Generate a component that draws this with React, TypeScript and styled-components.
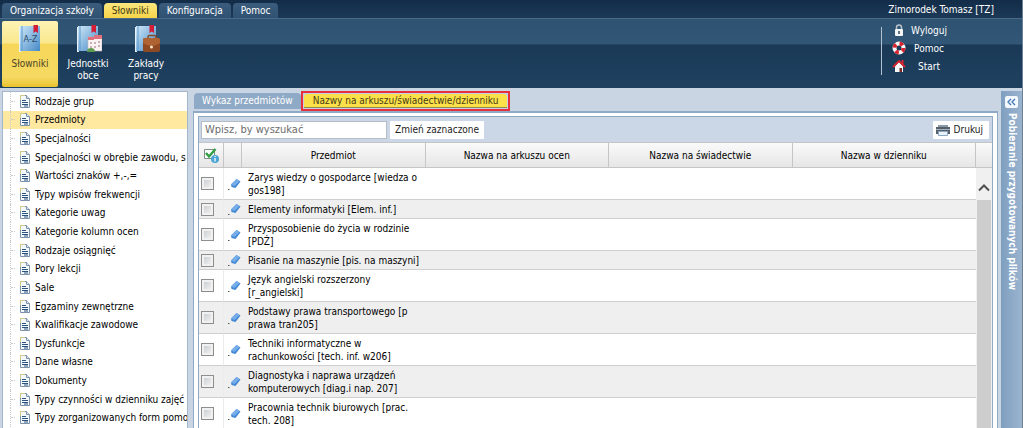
import React from "react";
import styled, { createGlobalStyle, css } from "styled-components";

const Global = createGlobalStyle`
  *, *::before, *::after { box-sizing: border-box; }
  html, body, #root { height: 100%; margin: 0; }
  body { overflow: hidden; background: #cad5e4; }
  body, button, input { font-family: "DejaVu Sans Condensed", "Noto Sans", sans-serif; font-size: 10px; }
`;

const Page = styled.div`
  height: 100vh;
  display: flex;
  flex-direction: column;
  border-right: 1px solid #6f8191;
  color: #000;
`;
const TopBar = styled.header`
  flex: none;
  display: flex;
  justify-content: space-between;
  height: 18px;
  background: linear-gradient(#132c48, #1b3957);
`;
const Nav = styled.nav`
  display: flex;
  gap: 2px;
  padding: 3px 0 0 2px;
`;
const NavTab = styled.button<{ $on?: boolean }>`
  height: 15px;
  padding: 0 8px;
  border: 0;
  border-radius: 4px 4px 0 0;
  line-height: 15px;
  white-space: nowrap;
  color: ${(p) => (p.$on ? "#453c16" : "#fff")};
  background: ${(p) => (p.$on ? "linear-gradient(#fbe77e, #f7d54a)" : "linear-gradient(#3b5c7c, #2f5273)")};
`;
const User = styled.div`
  padding-right: 28px;
  line-height: 20px;
  color: #fff;
`;
const Ribbon = styled.div`
  flex: none;
  display: flex;
  justify-content: space-between;
  height: 70px;
  padding: 2px 0 1px 2px;
  border-top: 1px solid #4a6a88;
  background: linear-gradient(#2d5272, #315676 25px, #1a3957 26px, #1f4160);
`;
const RibbonItems = styled.div`
  display: flex;
  gap: 2px;
`;
const RibbonButton = styled.button<{ $on?: boolean }>`
  display: flex;
  flex-direction: column;
  align-items: center;
  gap: 5px;
  width: 56px;
  padding: 4px 2px 0;
  border: 0;
  border-radius: 2px;
  line-height: 12px;
  color: ${(p) => (p.$on ? "#4d4526" : "#fff")};
  background: ${(p) => (p.$on ? "linear-gradient(#fdf3b4, #fbe88e 22px, #f6d75a 23px, #f6d962 56px, #e9c22e)" : "none")};
`;
const UserArea = styled.div`
  display: flex;
  gap: 10px;
  padding-right: 17px;
`;
const Divider = styled.div`
  width: 1px;
  height: 48px;
  margin-top: 6px;
  background: #b4c2cf;
`;
const UserLinks = styled.ul`
  list-style: none;
  width: 113px;
  margin: 0;
  padding: 0;
`;
const UserLink = styled.a`
  display: grid;
  grid-template-columns: 14px 46px;
  align-items: center;
  height: 18px;
  color: #fff;
  text-align: center;
  text-decoration: none;
`;
const Body = styled.div`
  flex: 1;
  min-height: 0;
  display: flex;
  padding: 3px 0 0 2px;
`;
const Tree = styled.ul`
  list-style: none;
  flex: none;
  width: 186px;
  display: flex;
  flex-direction: column;
  margin: 0;
  padding: 0 0 1px;
  overflow: hidden;
  background: #fff;
  border: solid #a5b7cb;
  border-width: 1px 1px 0;
`;
const TreeItem = styled.li<{ $on?: boolean }>`
  flex: 1 0 18px;
  display: flex;
  background: ${(p) => (p.$on ? "#ffe8a0" : "transparent")};
`;
const TreeLink = styled.a`
  flex: 1;
  display: flex;
  align-items: center;
  gap: 4px;
  margin-left: 7px;
  border-left: 1px dotted #c9c9c9;
  color: #000;
  text-decoration: none;
  white-space: nowrap;
  &::before { content: ""; width: 4px; border-top: 1px dotted #c9c9c9; }
`;
const Main = styled.main`
  flex: 1;
  min-width: 0;
  display: flex;
  flex-direction: column;
  margin-left: 5px;
`;
const Tabs = styled.div`
  flex: none;
  display: flex;
  align-items: flex-end;
  height: 20px;
  padding-left: 1px;
`;
const Tab = styled.button`
  height: 16px;
  margin-bottom: 2px;
  padding: 0 8px;
  border: 0;
  border-radius: 4px 4px 0 0;
  line-height: 16px;
  white-space: nowrap;
  color: #fff;
  background: #8faac6;
`;
const Marked = styled.div`
  display: flex;
  padding: 1px;
  height: 20px;
  border: 2px solid #e8303c;
  background: #c4d0ea;
`;
const ActiveTab = styled(Tab)`
  height: 14px;
  margin: 0;
  padding: 0 9px;
  border-bottom: 1px solid #8f8a4c;
  border-radius: 3px 3px 0 0;
  line-height: 14px;
  color: #453c16;
  background: #fbe04a;
`;
const Panel = styled.div`
  flex: 1;
  min-height: 0;
  padding: 3px 4px 0;
  overflow: hidden;
  background: #fff;
  border: solid #8faac6;
  border-width: 2px 1px 0;
`;
const Frame = styled.div`
  height: 100%;
  display: flex;
  flex-direction: column;
  border: solid #8fa9c5;
  border-width: 1px 1px 0;
`;
const Tools = styled.div`
  flex: none;
  display: flex;
  align-items: center;
  gap: 3px;
  height: 25px;
  padding: 0 3px 0 2px;
  background: #cbd7e6;
`;
const Search = styled.input`
  width: 186px;
  height: 18px;
  padding: 0 3px;
  border: 1px solid #b5bcc4;
  font-size: 11px;
  &::placeholder { color: #6c6c6c; opacity: 1; }
`;
const ToolButton = styled.button<{ $end?: boolean }>`
  display: flex;
  align-items: center;
  gap: 4px;
  height: 18px;
  padding: 0 5px;
  border: 0;
  border-radius: 1px;
  color: #222;
  background: #fff;
  ${(p) => p.$end && css`margin-left: auto; padding: 0 6px 0 3px;`}
`;
const GridArea = styled.div`
  flex: 1;
  min-height: 0;
  display: flex;
  overflow: hidden;
`;
const Table = styled.table`
  width: 100%;
  align-self: flex-start;
  min-width: 0;
  table-layout: fixed;
  border-collapse: separate;
  border-spacing: 0;
`;
const Th = styled.th`
  height: 26px;
  padding: 0;
  border: solid #c5c5c5;
  border-width: 1px 1px 1px 0;
  font-weight: normal;
  background: linear-gradient(#fafafa, #e6e6e6);
  & > svg { display: block; margin: auto; }
`;
const Tr = styled.tr`
  &:nth-child(even) { background: #efefef; }
`;
const Td = styled.td<{ $line?: boolean }>`
  padding: 3px 2px 2px 6px;
  border-bottom: 1px solid #cfcfcf;
  border-right: ${(p) => (p.$line ? "1px solid #ececec" : "0")};
  line-height: 13px;
  vertical-align: middle;
`;
const IconTd = styled(Td)`
  padding: 0;
  & > * { display: block; }
`;
const Check = styled.input`
  appearance: none;
  width: 13px;
  height: 13px;
  margin: 0 0 0 2px;
  border: 1px solid #8e8e8e;
  background: linear-gradient(135deg, #c4c8cc, #f7f7f7);
  box-shadow: inset 0 0 0 2px #f1f1f1;
`;
const EditButton = styled.button`
  height: 14px;
  margin: 0 0 0 3px;
  padding: 0;
  border: 0;
  background: none;
  & > svg { display: block; }
`;
const Scroll = styled.div`
  flex: none;
  width: 16px;
  display: flex;
  flex-direction: column;
  background: #f0f0f0;
`;
const ScrollHead = styled.div`
  height: 26px;
  border: solid #c5c5c5;
  border-width: 1px 0;
  background: linear-gradient(#fafafa, #e6e6e6);
`;
const ScrollUp = styled.button`
  height: 32px;
  padding: 8px 0 0;
  border: 0;
  background: #f0f0f0;
`;
const Thumb = styled.div`
  flex: 1;
  margin: 0 1px;
  background: #cdcdcd;
`;
const Side = styled.aside`
  flex: none;
  width: 21px;
  display: flex;
  flex-direction: column;
  align-items: center;
  gap: 5px;
  margin-left: 3px;
  padding-top: 5px;
  background: linear-gradient(90deg, #7f9fc0, #9ab4cf);
`;
const Expand = styled.button`
  width: 13px;
  height: 12px;
  padding: 0;
  border: 0;
  border-radius: 2px;
  background: #f3f8fe;
  & > svg { display: block; margin: auto; }
`;
const SideTitle = styled.div`
  writing-mode: vertical-rl;
  line-height: 14px;
  font-weight: bold;
  white-space: nowrap;
  color: #fff;
`;

const Book = ({ kind }: { kind: "az" | "calendar" | "case" }) => (
  <svg width="28" height="28" viewBox="0 0 28 28" aria-hidden="true">
    <defs>
      <linearGradient id={"book-" + kind} x2="1" y2="1">
        <stop stopColor="#cfe8f9" />
        <stop offset="1" stopColor="#4489c6" />
      </linearGradient>
    </defs>
    <path d="M3 2h2v25H3z" fill="#e7f2fb" />
    <path d="M4 1h20v25H4z" fill={"url(#book-" + kind + ")"} />
    <path d="M6 1v25" stroke="#5b98cc" />
    <path d="M17.500 0h4.500v8l-2.250-1.500-2.250 1.500z" fill="#d21d35" />
    {kind === "az" && (
      <text x="14.500" y="17" textAnchor="middle" fontSize="9" fill="#2d4a66">A-Z</text>
    )}
    {kind === "calendar" && (
      <g>
        <path d="M14 12h14v14H14z" fill="#faf3f3" stroke="#c9b5b8" strokeWidth=".6" />
        <path d="M20 10h8v4h-8zM14 12h6v3h-6z" fill="#e0707c" />
        <path d="M16 17h2v2h-2zm4 0h2v2h-2zm4-1h2v2h-2zm-8 5h2v2h-2zm4 0h2v2h-2zm4-1h2v2h-2z" fill="#cdaeb6" />
        <path d="M13 27q0-4 4-4t4 4z" fill="#5d9a4d" />
      </g>
    )}
    {kind === "case" && (
      <g>
        <path d="M16 14v-2q0-1.500 1.500-1.500h5q1.500 0 1.500 1.500v2" fill="none" stroke="#8a4a25" strokeWidth="1.500" />
        <rect x="11" y="13" width="17" height="14" rx="2" fill="#8f4a24" />
        <path d="M11 15q0-2 2-2h13q2 0 2 2v3q-8.500 6-17 0z" fill="#b06332" />
        <circle cx="19.500" cy="22" r="1.500" fill="#f6e9c8" />
      </g>
    )}
  </svg>
);

const Lock = () => (
  <svg width="14" height="14" viewBox="0 0 14 14" aria-hidden="true">
    <path d="M4.500 7V4.500a2.500 2.500 0 0 1 5 0V7" fill="none" stroke="#b8c2cc" strokeWidth="1.500" />
    <rect x="3" y="6" width="8" height="7" rx="1" fill="#f4f6f8" />
    <path d="M7 8v3" stroke="#33485c" strokeWidth="1.500" />
  </svg>
);
const Buoy = () => (
  <svg width="14" height="14" viewBox="0 0 14 14" aria-hidden="true">
    <circle cx="7" cy="7" r="4.500" fill="none" stroke="#f7f7f7" strokeWidth="4" />
    <circle cx="7" cy="7" r="4.500" fill="none" stroke="#d6252f" strokeWidth="4" strokeDasharray="3.530 3.540" />
  </svg>
);
const House = () => (
  <svg width="14" height="14" viewBox="0 0 14 14" aria-hidden="true">
    <path d="M9.500 1h2v4h-2z" fill="#d6252f" />
    <path d="M3 7l4-4 4 4v6H3z" fill="#f7f7f7" />
    <path d="M1 8l6-6 6 6" fill="none" stroke="#d6252f" strokeWidth="1.800" />
    <path d="M7.500 9H10v4H7.500z" fill="#7c2a25" />
  </svg>
);
const Doc = () => (
  <svg width="12" height="13" viewBox="0 0 12 13" aria-hidden="true">
    <path d="M1.500.5h6l3 3v9h-9z" fill="#f3f8fc" stroke="#7d93ab" />
    <path d="M7.500.5v3h3" fill="#dfe9f2" stroke="#7d93ab" />
    <path d="M3 5.500h4M3 7.500h6M3 9.500h6M5 11h4" stroke="#2c5280" />
    <path d="M1 .5h5M1.500 1v4" stroke="#cfc98a" />
  </svg>
);
const Eraser = () => (
  <svg width="14" height="14" viewBox="0 0 14 14" aria-hidden="true">
    <path d="M4 7.500L9.500 2l4 2.500L8.500 11 4.500 10z" fill="#4389d4" />
    <path d="M4 7.500L9.500 2l3 2L7.500 9z" fill="#77aeea" />
    <path d="M1 12.500h1.500" stroke="#555" />
  </svg>
);
const CheckAll = () => (
  <svg width="18" height="18" viewBox="0 0 18 18" aria-hidden="true">
    <path d="M2.500 3.500h10v9h-10z" fill="#fff" stroke="#7c8f86" />
    <path d="M4 7l3 3.500L13.500 3" fill="none" stroke="#2f9e44" strokeWidth="2.400" />
    <circle cx="13" cy="13" r="4" fill="#4aa5d4" />
    <path d="M13 12v3.500M13 10v1" stroke="#fff" strokeWidth="1.300" />
  </svg>
);
const Printer = () => (
  <svg width="14" height="14" viewBox="0 0 14 14" aria-hidden="true">
    <path d="M2 2h10v2H2z" fill="#8b98a5" />
    <path d="M0 4h14v7H0z" fill="#55606b" />
    <path d="M0 6.500h14" stroke="#a4b2bf" />
    <path d="M2.500 8.500h9v4h-9z" fill="#eaf3fb" stroke="#8aa6c2" />
  </svg>
);

const tree = [
  "Rodzaje grup", "Przedmioty", "Specjalności", "Specjalności w obrębie zawodu, s",
  "Wartości znaków +,-,=", "Typy wpisów frekwencji", "Kategorie uwag", "Kategorie kolumn ocen",
  "Rodzaje osiągnięć", "Pory lekcji", "Sale", "Egzaminy zewnętrzne", "Kwalifikacje zawodowe",
  "Dysfunkcje", "Dane własne", "Dokumenty", "Typy czynności w dzienniku zajęć",
  "Typy zorganizowanych form pomo",
];
const rows = [
  ["Zarys wiedzy o gospodarce [wiedza o", "gos198]"],
  ["Elementy informatyki [Elem. inf.]"],
  ["Przysposobienie do życia w rodzinie", "[PDŻ]"],
  ["Pisanie na maszynie [pis. na maszyni]"],
  ["Język angielski rozszerzony", "[r_angielski]"],
  ["Podstawy prawa transportowego [p", "prawa tran205]"],
  ["Techniki informatyczne w", "rachunkowości [tech. inf. w206]"],
  ["Diagnostyka i naprawa urządzeń", "komputerowych [diag.i nap. 207]"],
  ["Pracownia technik biurowych [prac.", "tech. 208]"],
];

export default function App() {
  return (
    <Page>
      <Global />
      <TopBar>
        <Nav>
          <NavTab>Organizacja szkoły</NavTab>
          <NavTab $on>Słowniki</NavTab>
          <NavTab>Konfiguracja</NavTab>
          <NavTab>Pomoc</NavTab>
        </Nav>
        <User>Zimorodek Tomasz [TZ]</User>
      </TopBar>
      <Ribbon>
        <RibbonItems>
          <RibbonButton $on><Book kind="az" />Słowniki</RibbonButton>
          <RibbonButton><Book kind="calendar" />Jednostki obce</RibbonButton>
          <RibbonButton><Book kind="case" />Zakłady pracy</RibbonButton>
        </RibbonItems>
        <UserArea>
          <Divider />
          <UserLinks>
            <li><UserLink href="#wyloguj"><Lock />Wyloguj</UserLink></li>
            <li><UserLink href="#pomoc"><Buoy />Pomoc</UserLink></li>
            <li><UserLink href="#start"><House />Start</UserLink></li>
          </UserLinks>
        </UserArea>
      </Ribbon>
      <Body>
        <Tree>
          {tree.map((t, i) => (
            <TreeItem key={t} $on={i === 1}>
              <TreeLink href="#slownik"><Doc />{t}</TreeLink>
            </TreeItem>
          ))}
        </Tree>
        <Main>
          <Tabs>
            <Tab>Wykaz przedmiotów</Tab>
            <Marked><ActiveTab>Nazwy na arkuszu/świadectwie/dzienniku</ActiveTab></Marked>
          </Tabs>
          <Panel>
            <Frame>
              <Tools>
                <Search aria-label="Wyszukaj" placeholder="Wpisz, by wyszukać" />
                <ToolButton>Zmień zaznaczone</ToolButton>
                <ToolButton $end><Printer />Drukuj</ToolButton>
              </Tools>
              <GridArea>
                <Table>
                  <colgroup>
                    <col width="25" /><col width="18" /><col /><col /><col /><col />
                  </colgroup>
                  <thead>
                    <tr>
                      <Th><CheckAll /></Th><Th />
                      <Th>Przedmiot</Th><Th>Nazwa na arkuszu ocen</Th>
                      <Th>Nazwa na świadectwie</Th><Th>Nazwa w dzienniku</Th>
                    </tr>
                  </thead>
                  <tbody>
                    {rows.map((r) => (
                      <Tr key={r[0]}>
                        <IconTd $line><Check type="checkbox" aria-label={r.join(" ")} /></IconTd>
                        <IconTd><EditButton aria-label="Edytuj"><Eraser /></EditButton></IconTd>
                        <Td>{r[0]}{r[1] && <><br />{r[1]}</>}</Td>
                        <Td /><Td /><Td />
                      </Tr>
                    ))}
                  </tbody>
                </Table>
                <Scroll>
                  <ScrollHead />
                  <ScrollUp aria-label="W górę">
                    <svg width="12" height="8" viewBox="0 0 12 8"><path d="M1 6.500l5-5 5 5" fill="none" stroke="#505050" strokeWidth="2" /></svg>
                  </ScrollUp>
                  <Thumb />
                </Scroll>
              </GridArea>
            </Frame>
          </Panel>
        </Main>
        <Side>
          <Expand aria-label="Rozwiń">
            <svg width="9" height="8" viewBox="0 0 9 8"><path d="M4 1L1 4l3 3M8 1L5 4l3 3" fill="none" stroke="#3f74b5" strokeWidth="1.300" /></svg>
          </Expand>
          <SideTitle>Pobieranie przygotowanych plików</SideTitle>
        </Side>
      </Body>
    </Page>
  );
}
